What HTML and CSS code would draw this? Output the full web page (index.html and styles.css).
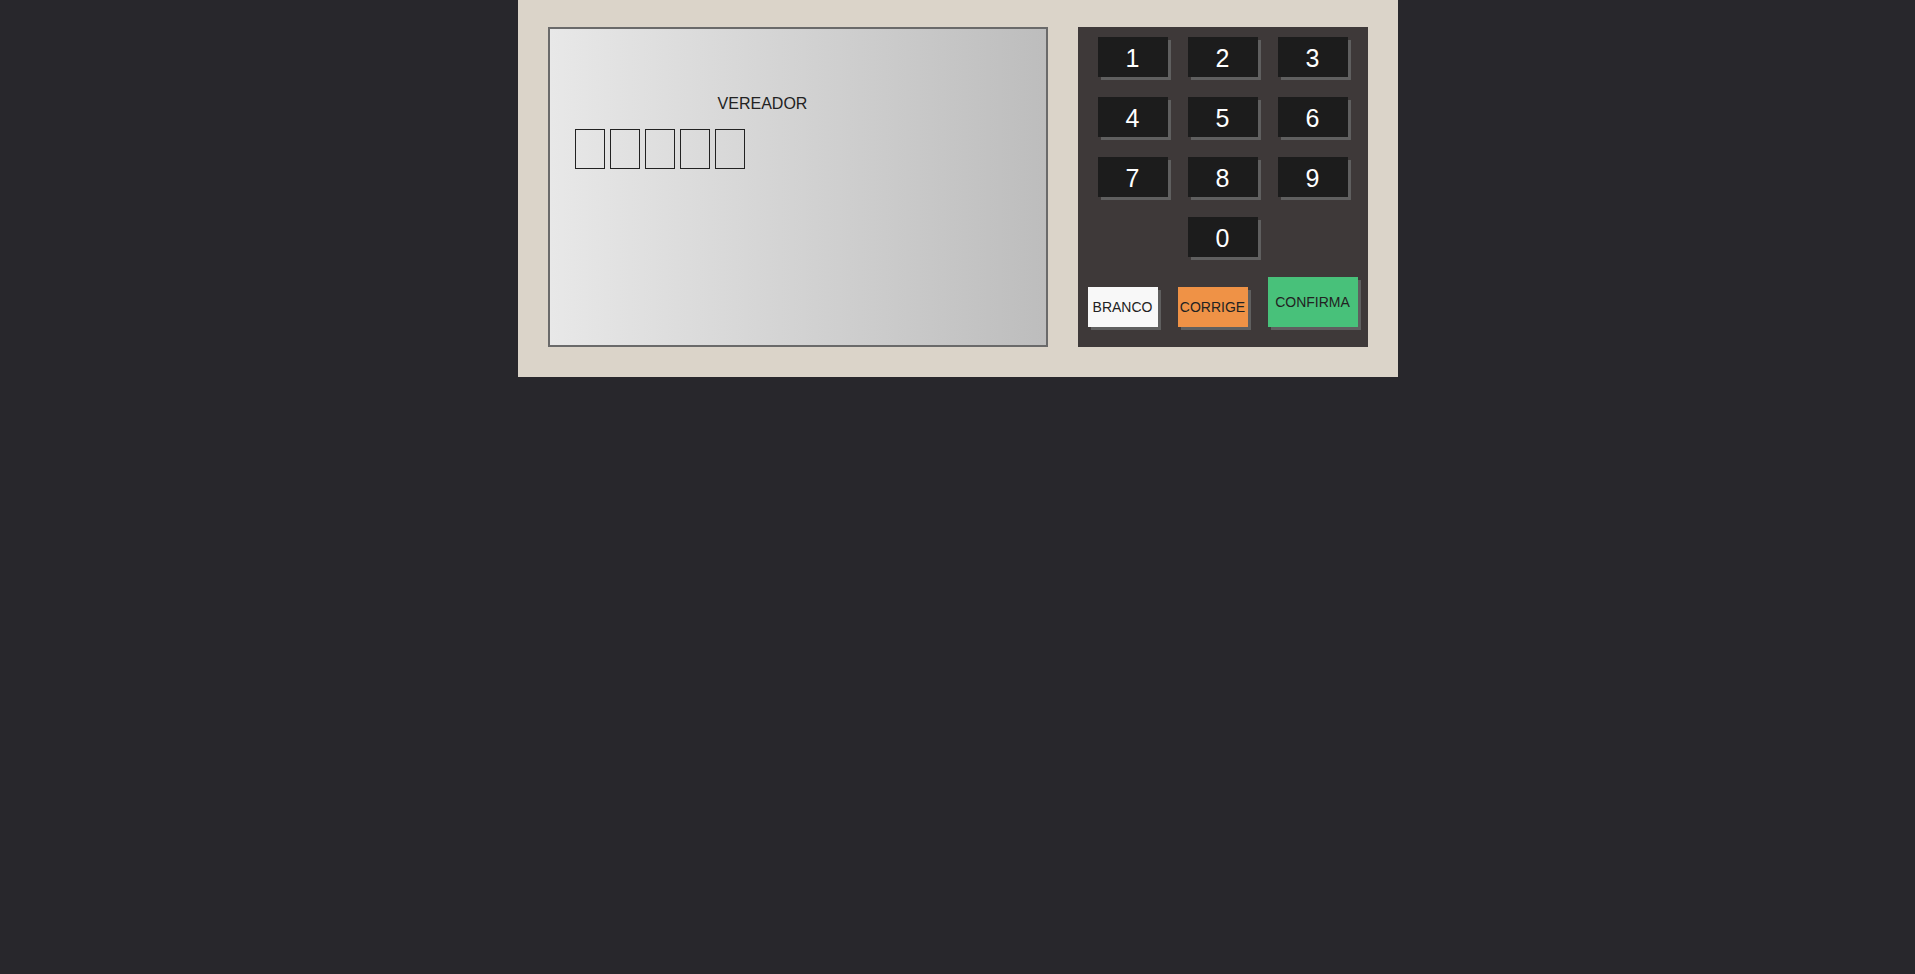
FILE: index.html
```html
<!DOCTYPE html>
<html lang="pt-BR">
<head>
<meta charset="utf-8">
<title>Urna</title>
<link rel="stylesheet" href="styles.css">
</head>
<body>
<div class="urna">
  <div class="tela">
    <div class="info">
      <div class="cargo">VEREADOR</div>
      <div class="numeros">
        <div class="numero"></div>
        <div class="numero"></div>
        <div class="numero"></div>
        <div class="numero"></div>
        <div class="numero"></div>
      </div>
    </div>
  </div>
  <div class="teclado">
    <div class="teclas">
      <div class="tecla">1</div>
      <div class="tecla">2</div>
      <div class="tecla">3</div>
      <div class="tecla">4</div>
      <div class="tecla">5</div>
      <div class="tecla">6</div>
      <div class="tecla">7</div>
      <div class="tecla">8</div>
      <div class="tecla">9</div>
      <div class="tecla zero">0</div>
    </div>
    <div class="acoes">
      <div class="botao branco">BRANCO</div>
      <div class="botao corrige">CORRIGE</div>
      <div class="botao confirma">CONFIRMA</div>
    </div>
  </div>
</div>
</body>
</html>
```
FILE: styles.css
```css
html, body {
  margin: 0;
  padding: 0;
}
body {
  background: #28272c;
  font-family: "Liberation Sans", Arial, sans-serif;
  height: 974px;
}
.urna {
  box-sizing: border-box;
  width: 880px;
  margin: 0 auto;
  padding: 27px 30px 30px;
  background: #dbd4c9;
  display: flex;
  gap: 30px;
}
.tela {
  box-sizing: border-box;
  width: 500px;
  border: 2px solid #6a6a6a;
  background: linear-gradient(to right, #e8e8e8, #bdbdbd);
  padding: 66px 0 0 25px;
}
.info {
  width: 376px;
}
.cargo {
  text-align: center;
  font-size: 16px;
  line-height: 18px;
  color: #222;
}
.numeros {
  display: flex;
  gap: 5px;
  margin-top: 16px;
}
.numero {
  box-sizing: border-box;
  width: 30px;
  height: 40px;
  border: 1px solid #222;
}
.teclado {
  box-sizing: border-box;
  width: 290px;
  height: 320px;
  background: #3e3939;
  padding: 10px 10px 20px;
}
.teclas {
  display: grid;
  grid-template-columns: repeat(3, 70px);
  grid-auto-rows: 40px;
  gap: 20px;
  justify-content: center;
}
.tecla {
  background: #1c1c1c;
  color: #fff;
  font-size: 25px;
  padding-top: 2px;
  box-sizing: border-box;
  display: flex;
  align-items: center;
  justify-content: center;
  box-shadow: 3px 3px 0 #5f5f5f;
}
.zero {
  grid-column: 2;
}
.acoes {
  display: flex;
  gap: 20px;
  justify-content: center;
  align-items: flex-end;
  margin-top: 20px;
}
.botao {
  width: 70px;
  height: 40px;
  display: flex;
  align-items: center;
  justify-content: center;
  font-size: 14px;
  color: #222;
  box-shadow: 3px 3px 0 #5f5f5f;
}
.branco {
  background: #f8f8f8;
}
.corrige {
  background: #ef9246;
}
.confirma {
  width: 90px;
  height: 50px;
  background: #48c17a;
}
```
